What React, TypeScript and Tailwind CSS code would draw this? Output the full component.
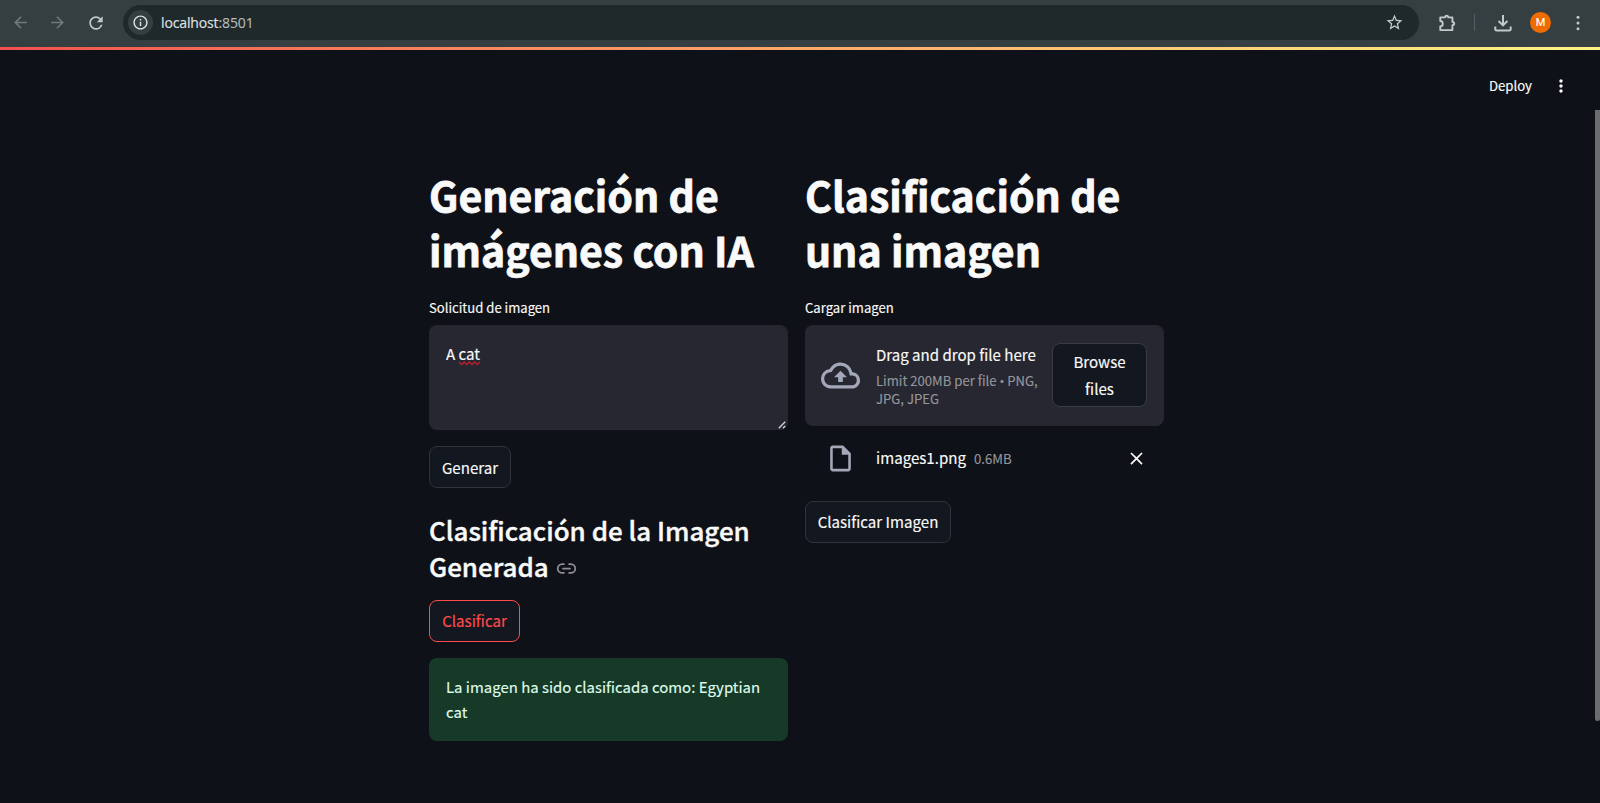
import type { ReactNode } from "react";
import {
  MdArrowBack,
  MdArrowForward,
  MdClear,
  MdInfoOutline,
  MdMoreVert,
  MdOutlineCloudUpload,
  MdOutlineInsertDriveFile,
  MdRefresh,
  MdStarBorder,
} from "react-icons/md";
import { Link2 } from "lucide-react";

function PuzzleIcon() {
  return (
    <svg width="18" height="18" viewBox="0 0 18 18" fill="none" stroke="#c3c9cb" strokeWidth="1.9" strokeLinejoin="round">
      <path d="M2.3 3.4H7.2C7.2 1.2 10.2 1.2 10.2 3.4H14.4V8C16.8 8 16.8 11.2 14.4 11.2V16.1H2.3V12.4C5.6 12.2 5.6 7.2 2.3 7V3.4Z" />
    </svg>
  );
}

function DownloadIcon() {
  return (
    <svg width="18" height="18" viewBox="0 0 18 18" fill="none" stroke="#c3c9cb" strokeWidth="2">
      <path d="M9 1V11.2M4.6 7L9 11.4L13.4 7" />
      <path d="M1.3 12.6V15.2Q1.3 16.6 2.7 16.6H15.3Q16.7 16.6 16.7 15.2V12.6" />
    </svg>
  );
}

function BrowserBar() {
  return (
    <div className="flex h-[47px] shrink-0 items-start bg-[#353e41] pt-[5px]">
      <div className="flex h-[35px] w-[123px] shrink-0 items-center pl-[11px]">
        <MdArrowBack className="size-[19px] text-[#70797c]" />
        <MdArrowForward className="ml-[18px] size-[19px] text-[#70797c]" />
        <MdRefresh className="ml-[19px] size-[20px] text-[#c3c9cb]" />
      </div>
      <div className="flex h-[35px] w-[1296px] shrink-0 items-center rounded-full bg-[#1f282a] pr-[15px] pl-[5px]">
        <div className="flex size-[25px] items-center justify-center rounded-full bg-[#353e41]">
          <MdInfoOutline className="size-[17px] text-[#dfe3e4]" />
        </div>
        <div className="ml-[8px] pt-px font-['Open_Sans',sans-serif] text-[14px] leading-[20px] tracking-[-0.13px] text-[#b4babb]">
          <span className="text-[#dfe3e4]">localhost</span>:8501
        </div>
        <MdStarBorder className="ml-auto size-[19px] text-[#c3c9cb]" />
      </div>
      <div className="flex h-[35px] flex-1 items-center pl-[19px]">
        <PuzzleIcon />
        <div className="ml-[18px] h-[17px] w-px bg-[#566064]" />
        <div className="ml-[19px]">
          <DownloadIcon />
        </div>
        <div className="ml-[18px] flex size-[21px] items-center justify-center rounded-full bg-[#ef6c00] font-['Roboto',sans-serif] text-[11px] leading-none text-white">
          M
        </div>
        <svg className="ml-[25px]" width="4" height="16" viewBox="0 0 4 16" fill="#c3c9cb">
          <circle cx="2" cy="2.3" r="1.5" />
          <circle cx="2" cy="8" r="1.5" />
          <circle cx="2" cy="13.7" r="1.5" />
        </svg>
      </div>
    </div>
  );
}

function Button({ children, className }: { children: ReactNode; className: string }) {
  return (
    <button className={`flex h-[42px] shrink-0 items-center justify-center rounded-lg border bg-[#131720] text-[15.1px] leading-[24px] ${className}`}>
      {children}
    </button>
  );
}

function Title({ children }: { children: ReactNode }) {
  return (
    <h1 className="h-[109px] text-[41px] leading-[54.7px] font-bold whitespace-nowrap [-webkit-text-stroke:0.8px_#fafafa]">
      {children}
    </h1>
  );
}

function FieldLabel({ children }: { children: ReactNode }) {
  return <div className="mt-[21px] mb-[7px] text-[13.1px] leading-[21px]">{children}</div>;
}

export default function App() {
  return (
    <div className="relative flex h-[803px] w-[1600px] flex-col overflow-hidden bg-[#0e1117] font-['Noto_Sans_CJK_SC',sans-serif] text-[#fafafa] [-webkit-text-stroke:0.15px_currentColor]">
      <BrowserBar />
      <div className="h-[3px] shrink-0 bg-linear-to-r from-[#f2514f] to-[#fdf487]" />

      <div className="flex h-[70px] shrink-0 items-center justify-end pr-[29px]">
        <span className="text-[13.2px] leading-[21px]">Deploy</span>
        <MdMoreVert className="mt-px ml-[19px] size-[20px]" />
      </div>

      <main className="flex gap-[17px] pt-[47px] pl-[429px]">
        <section className="flex w-[359px] flex-col">
          <Title>
            Generación de
            <br />
            imágenes con IA
          </Title>
          <FieldLabel>Solicitud de imagen</FieldLabel>
          <div className="relative h-[105px] rounded-lg bg-[#262730] px-[17px] pt-[16px] text-[15.1px] leading-[24px]">
            A cat
            <svg className="absolute top-[36px] left-[30px]" width="22" height="5" viewBox="0 0 22 5" fill="none" stroke="#c4202a" strokeWidth="1.3">
              <path d="M0 1L2.6 3.6L5.2 1L7.8 3.6L10.4 1L13 3.6L15.6 1L18.2 3.6L20.8 1" />
            </svg>
            <svg className="absolute right-[2px] bottom-[1px]" width="8" height="8" viewBox="0 0 8 8" stroke="#d5d5d8" strokeWidth="1.3">
              <path d="M0.8 7.2L7.2 0.8M5 7.2L7.2 5" />
            </svg>
          </div>
          <Button className="mt-[16px] w-[82px] border-[#31333b] pb-px">Generar</Button>

          <h2 className="mt-[24.4px] text-[25.95px] leading-[35.3px] font-medium whitespace-nowrap [-webkit-text-stroke:0.4px_#fafafa]">
            Clasificación de la Imagen
            <br />
            <span className="flex items-center">
              Generada
              <Link2 className="mt-[6px] ml-[7px] size-[21px] text-[#8d8f94]" strokeWidth={2} />
            </span>
          </h2>
          <Button className="mt-[16.6px] w-[91px] border-[#ff4b4b] pb-px text-[#ff4b4b]">Clasificar</Button>
          <div className="mt-[16.6px] h-[83px] rounded-lg bg-[#173928] px-[17px] pt-[16px] text-[14.95px] leading-[25.3px] whitespace-nowrap text-[#dffde9]">
            La imagen ha sido clasificada como: Egyptian
            <br />
            cat
          </div>
        </section>

        <section className="flex w-[359px] flex-col">
          <Title>
            Clasificación de
            <br />
            una imagen
          </Title>
          <FieldLabel>Cargar imagen</FieldLabel>
          <div className="flex h-[101px] items-center rounded-lg bg-[#262730] px-[16px] pb-px">
            <MdOutlineCloudUpload className="size-[39px] shrink-0 text-[#a3a8b8]" />
            <div className="ml-[16px] w-[176px] shrink-0 whitespace-nowrap">
              <div className="text-[15.05px] leading-[26px]">Drag and drop file here</div>
              <div className="mt-[4px] text-[13.1px] leading-[18.5px] text-[#94959a]">
                Limit 200MB per file <span className="font-['Open_Sans',sans-serif]">•</span> PNG,
                <br />
                JPG, JPEG
              </div>
            </div>
            <div className="flex h-[64px] w-[95px] shrink-0 items-center justify-center rounded-lg border border-[#3a3c45] bg-[#131720] pb-px text-center text-[15.1px] leading-[26.6px]">
              Browse
              <br />
              files
            </div>
          </div>
          <div className="mt-[17px] flex h-[30px] items-center pl-[20px]">
            <MdOutlineInsertDriveFile className="size-[31px] text-[#a3a8b8]" />
            <div className="ml-[20px] flex items-baseline pb-px leading-[24px]">
              <span className="text-[15.1px]">images1.png</span>
              <span className="ml-[8px] text-[13.2px] text-[#94959a]">0.6MB</span>
            </div>
            <MdClear className="mr-[17px] ml-auto size-[21px]" />
          </div>
          <Button className="mt-[28px] w-[146px] border-[#31333b] pb-[2px]">Clasificar Imagen</Button>
        </section>
      </main>

      <div className="absolute top-[110px] right-0 h-[611px] w-[5px] rounded-b-sm bg-[#6b6c70]" />
    </div>
  );
}
